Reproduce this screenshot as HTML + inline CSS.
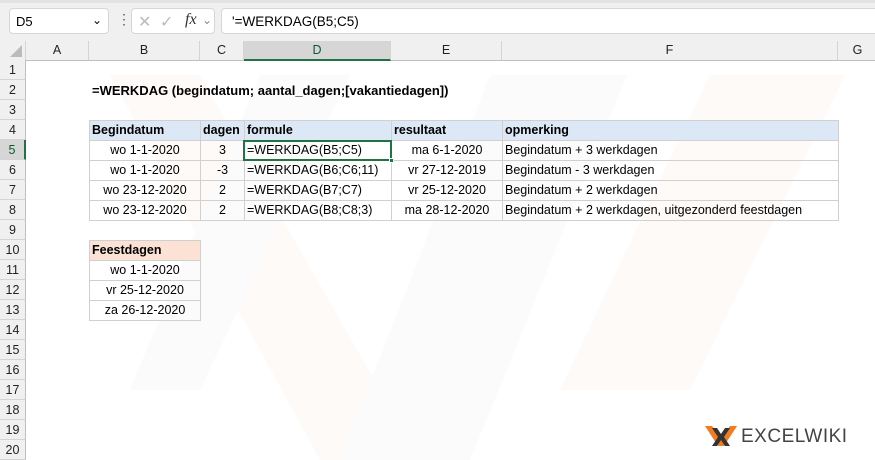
<!DOCTYPE html>
<html><head><style>
*{margin:0;padding:0;box-sizing:border-box}
body{width:875px;height:460px;overflow:hidden;background:#fff;font-family:"Liberation Sans",sans-serif;font-size:13px;color:#000;position:relative}
.a{position:absolute}
.top{left:0;top:0;width:875px;height:41px;background:#f0f0f0;border-top:3px solid #e3e3e3}
.box{background:#fff;border:1px solid #d6d6d6;border-radius:4px;position:absolute}
.ch{top:41px;height:20px;background:#f0f0f0;border-right:1px solid #d4d4d4;border-bottom:1px solid #bfbfbf;text-align:center;line-height:19px;color:#222;font-size:12.5px}
.rh{left:0;width:26px;height:20px;background:#f0f0f0;border-bottom:1px solid #d4d4d4;border-right:1px solid #bfbfbf;text-align:center;line-height:20px;color:#222;font-size:12.5px}
table{border-collapse:collapse;table-layout:fixed}
.c{height:20px;line-height:19px;border:1px solid #d0d0d0;white-space:nowrap;overflow:hidden;padding:0 2px;font-size:12.5px}
.h{background:#dce8f5;font-weight:bold}
.ctr{text-align:center}
</style></head><body>
<svg class="a" style="left:0;top:60px" width="875" height="400">
<polygon points="110,15 200,15 420,400 320,400" fill="#fefaf7"/>
<polygon points="260,15 350,15 200,330 130,330" fill="#fbfbfb"/>
<polygon points="490,15 627,15 470,400 340,400" fill="#fbfbfb"/>
<polygon points="710,15 845,15 690,330 560,330" fill="#fefaf7"/>
</svg>
<div class="a top"></div>
<div class="box" style="left:9px;top:8px;width:100px;height:26px;"><span class="a" style="left:6px;top:5px;font-size:13px">D5</span><span class="a" style="left:82px;top:4px;font-size:12px">&#8964;</span></div>
<div class="a" style="left:117px;top:11px;color:#555;font-size:14px">⋮</div>
<div class="box" style="left:131px;top:8px;width:84px;height:26px;color:#bbb"><span class="a" style="left:6px;top:3px;font-size:16px">✕</span><span class="a" style="left:28px;top:3px;font-size:16px">✓</span><span class="a" style="left:53px;top:2px;font-size:16px;color:#333;font-style:italic;font-family:'Liberation Serif',serif">fx</span><span class="a" style="left:70px;top:4px;font-size:12px;color:#888">&#8964;</span></div>
<div class="box" style="left:221px;top:8px;width:660px;height:26px;"><span class="a" style="left:10px;top:5px;font-size:13.5px">'=WERKDAG(B5;C5)</span></div>
<div class="a ch" style="left:0;width:26px"><svg width="12" height="12" style="position:absolute;right:3px;bottom:3px"><polygon points="12,0 12,12 0,12" fill="#bbb"/></svg></div>
<div class="a ch" style="left:26px;width:63px">A</div>
<div class="a ch" style="left:89px;width:111px">B</div>
<div class="a ch" style="left:200px;width:44px">C</div>
<div class="a ch" style="left:244px;width:147px;background:#d6d6d6;border-bottom:2px solid #217346;color:#0b5b2b">D</div>
<div class="a ch" style="left:391px;width:111px">E</div>
<div class="a ch" style="left:502px;width:336px">F</div>
<div class="a ch" style="left:838px;width:40px">G</div>
<div class="a rh" style="top:60px">1</div><div class="a rh" style="top:80px">2</div><div class="a rh" style="top:100px">3</div><div class="a rh" style="top:120px">4</div>
<div class="a rh" style="top:140px;background:#d6d6d6;border-right:2px solid #217346;color:#0b5b2b">5</div>
<div class="a rh" style="top:160px">6</div><div class="a rh" style="top:180px">7</div><div class="a rh" style="top:200px">8</div><div class="a rh" style="top:220px">9</div><div class="a rh" style="top:240px">10</div><div class="a rh" style="top:260px">11</div><div class="a rh" style="top:280px">12</div><div class="a rh" style="top:300px">13</div><div class="a rh" style="top:320px">14</div><div class="a rh" style="top:340px">15</div><div class="a rh" style="top:360px">16</div><div class="a rh" style="top:380px">17</div><div class="a rh" style="top:400px">18</div><div class="a rh" style="top:420px">19</div><div class="a rh" style="top:440px">20</div>
<div class="a" style="left:92px;top:83px;font-weight:bold;font-size:13px">=WERKDAG (begindatum; aantal_dagen;[vakantiedagen])</div>
<table class="a" style="left:89px;top:120px;width:749px">
<colgroup><col style="width:111px"><col style="width:44px"><col style="width:147px"><col style="width:111px"><col style="width:336px"></colgroup>
<tr><td class="c h">Begindatum</td><td class="c h">dagen</td><td class="c h">formule</td><td class="c h">resultaat</td><td class="c h">opmerking</td></tr>
<tr><td class="c ctr">wo 1-1-2020</td><td class="c ctr">3</td><td class="c">=WERKDAG(B5;C5)</td><td class="c ctr">ma 6-1-2020</td><td class="c">Begindatum + 3 werkdagen</td></tr>
<tr><td class="c ctr">wo 1-1-2020</td><td class="c ctr">-3</td><td class="c">=WERKDAG(B6;C6;11)</td><td class="c ctr">vr 27-12-2019</td><td class="c">Begindatum - 3 werkdagen</td></tr>
<tr><td class="c ctr">wo 23-12-2020</td><td class="c ctr">2</td><td class="c">=WERKDAG(B7;C7)</td><td class="c ctr">vr 25-12-2020</td><td class="c">Begindatum + 2 werkdagen</td></tr>
<tr><td class="c ctr">wo 23-12-2020</td><td class="c ctr">2</td><td class="c">=WERKDAG(B8;C8;3)</td><td class="c ctr">ma 28-12-2020</td><td class="c">Begindatum + 2 werkdagen, uitgezonderd feestdagen</td></tr>
</table>
<div class="a" style="left:243px;top:140px;width:149px;height:21px;border:2px solid #217346"></div>
<div class="a" style="left:389px;top:158px;width:5px;height:5px;background:#217346;border:1px solid #fff"></div>
<table class="a" style="left:89px;top:240px;width:111px">
<colgroup><col style="width:111px"></colgroup>
<tr><td class="c" style="background:#fbe2d5;font-weight:bold">Feestdagen</td></tr>
<tr><td class="c ctr">wo 1-1-2020</td></tr>
<tr><td class="c ctr">vr 25-12-2020</td></tr>
<tr><td class="c ctr">za 26-12-2020</td></tr>
</table>
<svg class="a" style="left:705px;top:426px" width="32" height="20"><polygon points="0,0 7,0 16,14 25,0 32,0 19,20 13,20" fill="#f47b20"/><polygon points="7,2 12,2 16,8 20,2 25,2 19,11 25,20 20,20 16,14 12,20 7,20 13,11" fill="#333"/></svg>
<div class="a" style="left:741px;top:426px;font-size:19px;color:#444;letter-spacing:0.5px">EXCELWIKI</div>
</body></html>
